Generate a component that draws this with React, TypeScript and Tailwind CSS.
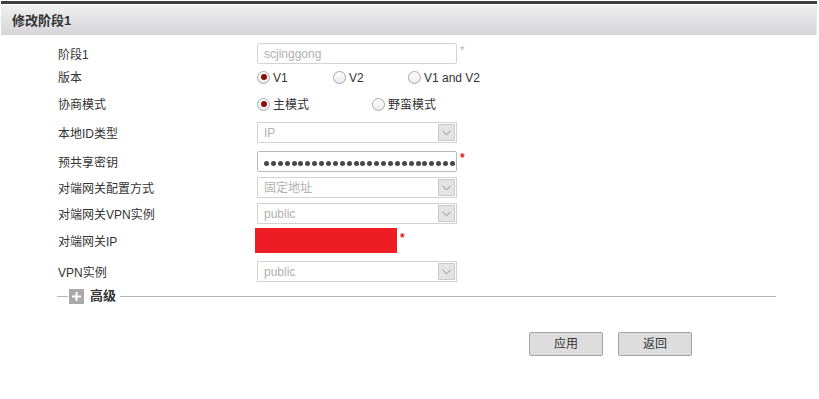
const font = { fontFamily: '"Liberation Sans", "Noto Sans CJK SC", sans-serif' }

function Chevron() {
  return (
    <div className="absolute right-[1px] top-[1px] bottom-[1px] w-[17px] bg-[#e4e4e4] border border-[#c9c9c9] flex items-center justify-center">
      <svg width="9" height="6" viewBox="0 0 9 6">
        <polyline points="0.5,0.8 4.5,4.8 8.5,0.8" fill="none" stroke="#a9a9a9" strokeWidth="1.1" />
      </svg>
    </div>
  )
}

function Select({ value }: { value: string }) {
  return (
    <div className="relative w-[200px] h-[21px] border border-[#d3d3d3] bg-white flex items-center pl-[6px] pt-[1px] text-[12px] text-[#b0b0b0]">
      {value}
      <Chevron />
    </div>
  )
}

function Radio({ checked, label, width }: { checked?: boolean; label: string; width: string }) {
  return (
    <div className={`flex items-center gap-[3px] ${width}`}>
      <div className="w-[13px] h-[13px] rounded-full border border-[#a8a8a8] bg-gradient-to-b from-white to-[#ececec] flex items-center justify-center">
        {checked && <div className="w-[6px] h-[6px] rounded-full bg-[#8e0c0c]" />}
      </div>
      <span className="text-[12px] text-[#333] pt-[1px]">{label}</span>
    </div>
  )
}

function Row({ label, h, mt, children }: { label: string; h: string; mt: string; children: React.ReactNode }) {
  return (
    <div className={`flex items-center ${h} ${mt}`}>
      <div className="w-[256px] shrink-0 pl-[57px] pt-[2px] text-[12px] text-[#333] whitespace-nowrap">{label}</div>
      {children}
    </div>
  )
}

export default function App() {
  return (
    <div className="w-[819px] h-[399px] bg-white pt-[1px] pl-[1px] pr-[2px]" style={font}>
      <div className="h-[3px] bg-[#3d3d42]" />
      <div className="mt-[1px] h-[30px] bg-gradient-to-b from-[#f0f0f0] to-[#d5d5d8] border-r border-[#e6e6e6] flex items-center pl-[11px] pt-[1px] text-[13px] font-bold text-[#333]">
        修改阶段1
      </div>

      <Row label="阶段1" h="h-[21px]" mt="mt-[8px]">
        <div className="w-[200px] h-[21px] border border-[#d3d3d3] rounded-[2px] flex items-center pl-[6px] pt-[1px] text-[12px] text-[#b0b0b0]">
          scjinggong
        </div>
        <span className="self-start ml-[3px] text-[11px] text-[#b0b0b0] leading-[14px]">*</span>
      </Row>

      <Row label="版本" h="h-[22px]" mt="mt-[2px]">
        <Radio checked label="V1" width="w-[76px]" />
        <Radio label="V2" width="w-[75px]" />
        <Radio label="V1 and V2" width="w-[90px]" />
      </Row>

      <Row label="协商模式" h="h-[22px]" mt="mt-[5px]">
        <Radio checked label="主模式" width="w-[115px]" />
        <Radio label="野蛮模式" width="w-[90px]" />
      </Row>

      <Row label="本地ID类型" h="h-[21px]" mt="mt-[7px]">
        <Select value="IP" />
      </Row>

      <Row label="预共享密钥" h="h-[21px]" mt="mt-[8px]">
        <div className="w-[200px] h-[21px] border border-[#b9b9b9] rounded-[2px] flex items-center pl-[6px] pt-[3px] gap-[1.9px]">
          {Array.from({ length: 28 }).map((_, i) => (
            <div key={i} className="w-[5px] h-[5px] shrink-0 rounded-full bg-[#474747]" />
          ))}
        </div>
        <span className="self-start ml-[3px] text-[12px] font-bold text-[#e8141e] leading-[14px]">*</span>
      </Row>

      <Row label="对端网关配置方式" h="h-[21px]" mt="mt-[5px]">
        <Select value="固定地址" />
      </Row>

      <Row label="对端网关VPN实例" h="h-[21px]" mt="mt-[5px]">
        <Select value="public" />
      </Row>

      <Row label="对端网关IP" h="h-[25px]" mt="mt-[4px]">
        <div className="-ml-[2px] w-[142px] h-[25px] bg-[#ee1c25]" />
        <span className="self-start mt-[3px] ml-[3px] text-[12px] font-bold text-[#e8141e] leading-[14px]">*</span>
      </Row>

      <Row label="VPN实例" h="h-[21px]" mt="mt-[8px]">
        <Select value="public" />
      </Row>

      <div className="flex items-center h-[16px] mt-[6px] pl-[56px] pr-[41px]">
        <div className="w-[11px] h-px bg-[#b5b5b5]" />
        <div className="ml-[1px] w-[15px] h-[15px] bg-[#a9a9a9] flex items-center justify-center">
          <svg width="9" height="9" viewBox="0 0 9 9">
            <rect x="3.5" y="0" width="2" height="9" fill="#fff" />
            <rect x="0" y="3.5" width="9" height="2" fill="#fff" />
          </svg>
        </div>
        <span className="ml-[6px] text-[13px] font-bold text-[#333]">高级</span>
        <div className="ml-[4px] flex-1 h-px bg-[#b5b5b5]" />
      </div>

      <div className="flex mt-[28px] pl-[528px] gap-[15px]">
        <button className="w-[74px] h-[24px] bg-[#dddddd] border border-[#a3a3a3] rounded-[2px] text-[12px] text-[#333]">应用</button>
        <button className="w-[74px] h-[24px] bg-[#dddddd] border border-[#a3a3a3] rounded-[2px] text-[12px] text-[#333]">返回</button>
      </div>
    </div>
  )
}
